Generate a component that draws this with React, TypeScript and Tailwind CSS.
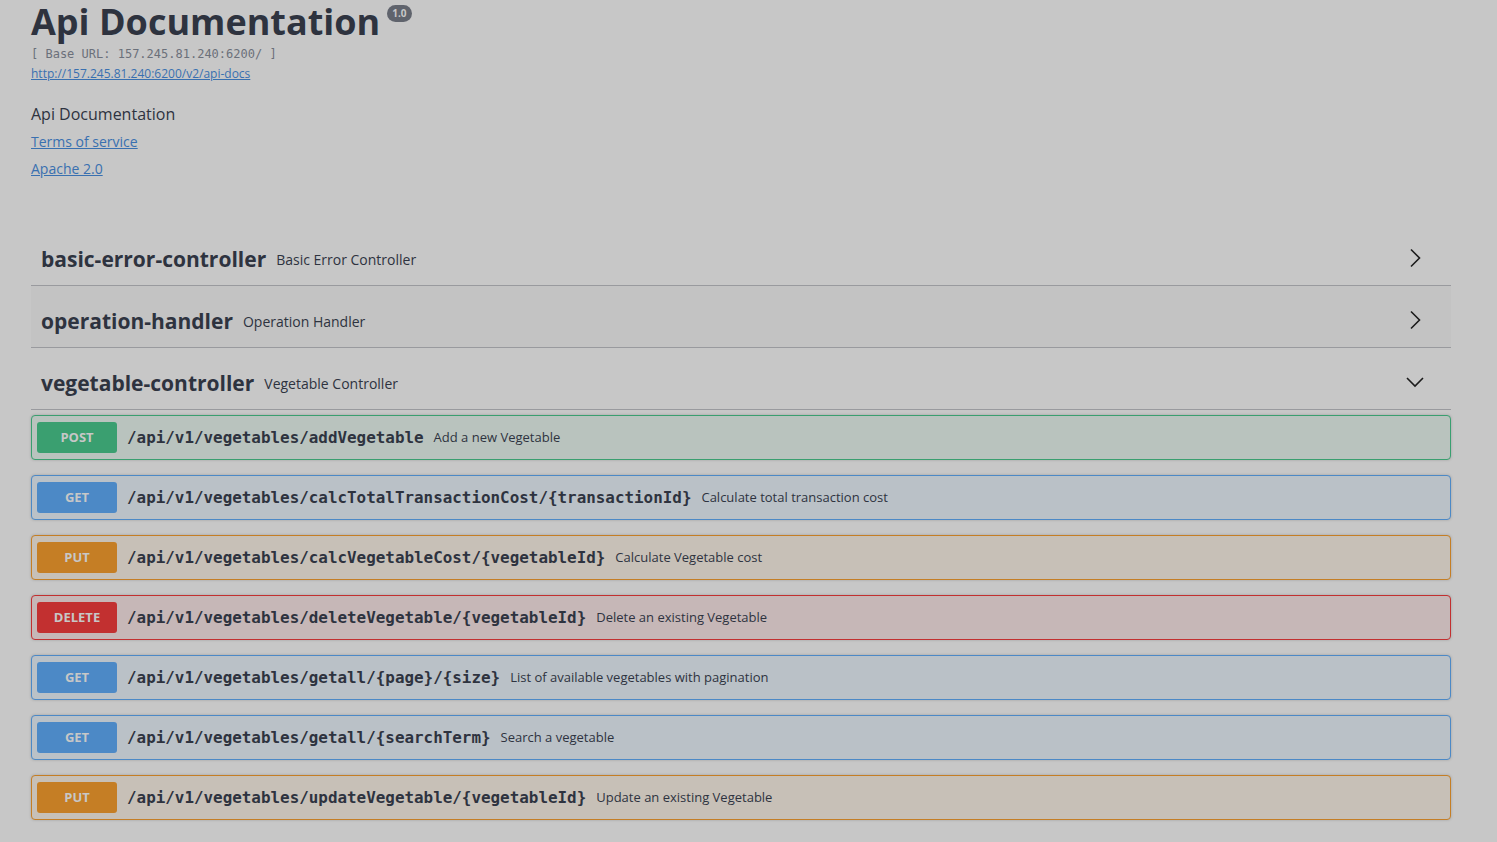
const sans = { fontFamily: '"Open Sans", "Noto Sans", sans-serif' }
const mono = { fontFamily: '"DejaVu Sans Mono", monospace' }

type Op = { method: 'POST' | 'GET' | 'PUT' | 'DELETE'; path: string; summary: string }

const ops: Op[] = [
  { method: 'POST', path: '/api/v1/vegetables/addVegetable', summary: 'Add a new Vegetable' },
  { method: 'GET', path: '/api/v1/vegetables/calcTotalTransactionCost/{transactionId}', summary: 'Calculate total transaction cost' },
  { method: 'PUT', path: '/api/v1/vegetables/calcVegetableCost/{vegetableId}', summary: 'Calculate Vegetable cost' },
  { method: 'DELETE', path: '/api/v1/vegetables/deleteVegetable/{vegetableId}', summary: 'Delete an existing Vegetable' },
  { method: 'GET', path: '/api/v1/vegetables/getall/{page}/{size}', summary: 'List of available vegetables with pagination' },
  { method: 'GET', path: '/api/v1/vegetables/getall/{searchTerm}', summary: 'Search a vegetable' },
  { method: 'PUT', path: '/api/v1/vegetables/updateVegetable/{vegetableId}', summary: 'Update an existing Vegetable' },
]

const methodStyle: Record<Op['method'], { block: string; badge: string }> = {
  POST: { block: 'border-[#3a9f70] bg-[#b9c3be]', badge: 'bg-[#3a9f70]' },
  GET: { block: 'border-[#4c89c6] bg-[#bac1c7]', badge: 'bg-[#4c89c6]' },
  PUT: { block: 'border-[#c57e25] bg-[#c7c0b7]', badge: 'bg-[#c57e25]' },
  DELETE: { block: 'border-[#c23030] bg-[#c6b7b7]', badge: 'bg-[#c23030]' },
}

function Chevron({ open }: { open?: boolean }) {
  return (
    <svg width="20" height="20" viewBox="0 0 20 20" className="mb-[4px] shrink-0">
      {open ? (
        <polyline points="2,6 10,14 18,6" fill="none" stroke="#1c1c1c" strokeWidth="1.6" />
      ) : (
        <polyline points="6,1.5 14.5,10 6,18.5" fill="none" stroke="#1c1c1c" strokeWidth="1.6" />
      )}
    </svg>
  )
}

function TagRow({ name, desc, open, shaded }: { name: string; desc: string; open?: boolean; shaded?: boolean }) {
  return (
    <div
      className={`flex h-[62px] items-center border-b border-[#999a9e] pl-[10px] pr-[26px] pt-[10px] ${shaded ? 'bg-[#c3c3c3]' : ''}`}
    >
      <span className="text-[21px] font-bold text-[#2e333f]">{name}</span>
      <span className="ml-[10px] flex-1 text-[14px] text-[#2e333f]">{desc}</span>
      <Chevron open={open} />
    </div>
  )
}

function OpBlock({ op }: { op: Op }) {
  const s = methodStyle[op.method]
  return (
    <div
      className={`mb-[15px] flex h-[45px] items-center rounded-[4px] border px-[5px] shadow-[0_0_3px_rgba(0,0,0,0.19)] ${s.block}`}
    >
      <span
        className={`flex h-[31px] w-[80px] items-center justify-center rounded-[3px] text-[13px] font-bold text-[#c7c7c7] ${s.badge}`}
      >
        {op.method}
      </span>
      <span className="ml-[10px] text-[15.9px] font-bold text-[#2e333f]" style={mono}>
        {op.path}
      </span>
      <span className="ml-[10px] text-[13px] text-[#2e333f]">{op.summary}</span>
    </div>
  )
}

export default function App() {
  return (
    <div className="min-h-[842px] w-full bg-[#c7c7c7] pl-[31px]" style={sans}>
      <div className="w-[1420px]">
        <div className="flex items-start">
          <h2 className="text-[36px] font-bold leading-[44px] text-[#2e333f]">Api Documentation</h2>
          <span className="ml-[7px] mt-[5px] rounded-[57px] bg-[#5f636c] px-[5px] py-[1px] text-[10px] font-bold leading-[15px] text-[#c7c7c7]">
            1.0
          </span>
        </div>
        <div className="mt-[2px] text-[12px] leading-[16px] text-[#6b707a]" style={mono}>
          [ Base URL: 157.245.81.240:6200/ ]
        </div>
        <a className="mt-[2px] block text-[12px] leading-[20px] text-[#3970b0] underline">
          http://157.245.81.240:6200/v2/api-docs
        </a>
        <div className="mt-[18px] text-[16px] leading-[24px] text-[#2e333f]">Api Documentation</div>
        <a className="mt-[5px] block text-[14px] leading-[22px] text-[#3970b0] underline">Terms of service</a>
        <a className="mt-[5px] block text-[14px] leading-[22px] text-[#3970b0] underline">Apache 2.0</a>

        <div className="mt-[44px]">
          <TagRow name="basic-error-controller" desc="Basic Error Controller" />
          <TagRow name="operation-handler" desc="Operation Handler" shaded />
          <TagRow name="vegetable-controller" desc="Vegetable Controller" open />
        </div>
        <div className="mt-[5px]">
          {ops.map((op) => (
            <OpBlock key={op.path} op={op} />
          ))}
        </div>
      </div>
    </div>
  )
}
